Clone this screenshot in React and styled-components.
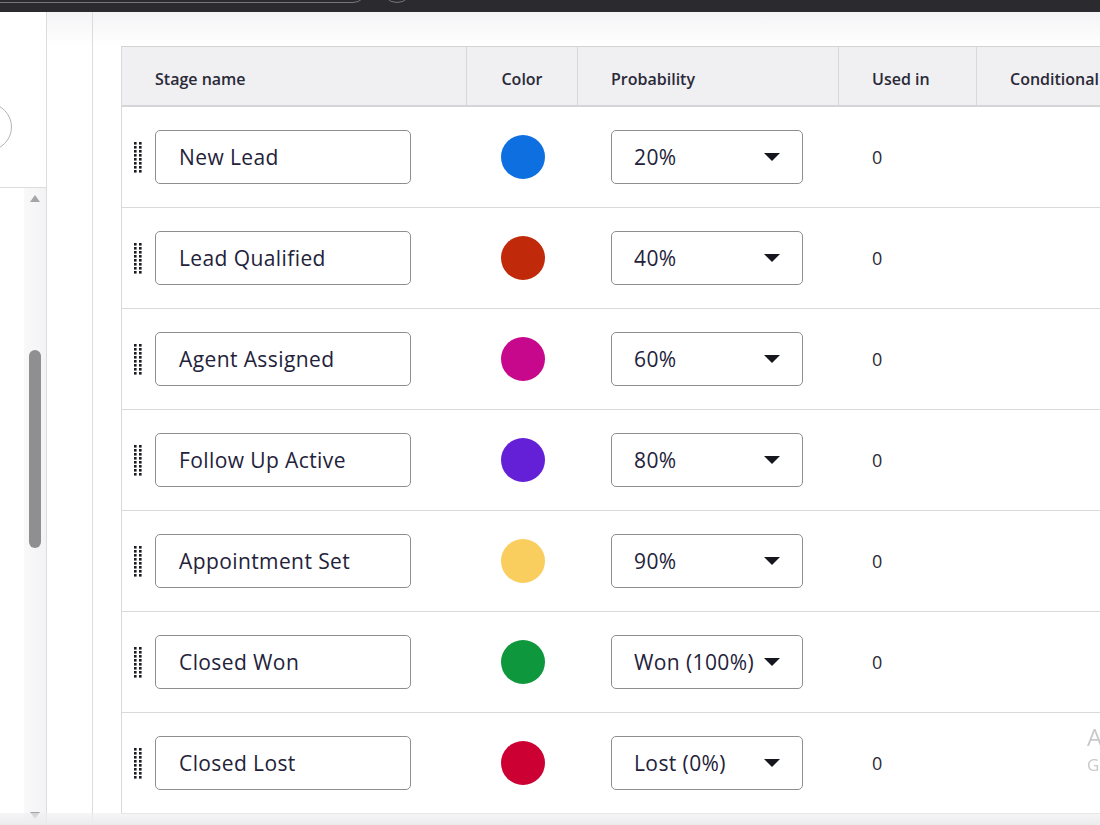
import React from 'react';
import styled, { createGlobalStyle } from 'styled-components';

const GlobalStyle = createGlobalStyle`
  html, body {
    margin: 0;
    padding: 0;
    background: #fff;
    overflow: hidden;
  }
  body {
    font-family: 'Open Sans', 'Liberation Sans', sans-serif;
    color: #23223a;
  }
`

const stages = [
  { name: 'New Lead', color: '#0d6fe0', prob: '20%' },
  { name: 'Lead Qualified', color: '#c0290a', prob: '40%' },
  { name: 'Agent Assigned', color: '#c7078c', prob: '60%' },
  { name: 'Follow Up Active', color: '#6320d6', prob: '80%' },
  { name: 'Appointment Set', color: '#f9cd5e', prob: '90%' },
  { name: 'Closed Won', color: '#0f973e', prob: 'Won (100%)' },
  { name: 'Closed Lost', color: '#cc0033', prob: 'Lost (0%)' },
]

const Page = styled.div`
  width: 1100px;
  height: 825px;
  display: flex;
  flex-direction: column;
  overflow: hidden;
`
const TopBar = styled.div`
  height: 12px;
  flex: none;
  background: #2b2a2e;
  display: flex;
  align-items: flex-end;
  overflow: hidden;
`
const UrlBar = styled.div`
  width: 380px;
  height: 30px;
  margin: 0 0 9px -15px;
  border: 1px solid #77767b;
  border-radius: 14px;
  flex: none;
`
const RoundBtn = styled.div`
  width: 30px;
  height: 30px;
  margin: 0 0 9px 14px;
  border: 1px solid #77767b;
  border-radius: 50%;
  flex: none;
`
const Body = styled.div`
  flex: 1;
  display: flex;
  min-height: 0;
`
const LeftPanel = styled.div`
  width: 46px;
  flex: none;
  border-right: 1px solid #dcdcdc;
  display: flex;
  flex-direction: column;
  overflow: hidden;
`
const PanelTop = styled.div`
  height: 176px;
  flex: none;
  border-bottom: 1px solid #dcdcdc;
  padding-top: 91px;
  box-sizing: border-box;
`
const PanelCircle = styled.div`
  width: 48px;
  height: 48px;
  margin-left: -36px;
  border: 1px solid #b4b4b8;
  border-radius: 50%;
  box-sizing: border-box;
`
const ScrollArea = styled.div`
  flex: 1;
  display: flex;
  justify-content: flex-end;
`
const Track = styled.div`
  width: 22px;
  background: linear-gradient(to right, #f9f9fa, #f3f3f5);
  display: flex;
  flex-direction: column;
  align-items: center;
  padding: 7px 0 6px;
  box-sizing: border-box;
`
const Arrow = styled.div`
  width: 0;
  height: 0;
  border-left: 5px solid transparent;
  border-right: 5px solid transparent;
  ${p => p.down
    ? 'border-top: 7px solid #a5a5a8; margin-top: auto;'
    : 'border-bottom: 7px solid #a5a5a8;'}
`
const Thumb = styled.div`
  width: 12px;
  height: 198px;
  margin-top: 148px;
  border-radius: 6px;
  background: #8f8f92;
`
const Gutter = styled.div`
  width: 45px;
  flex: none;
  border-right: 1px solid #dcdcdc;
  background: linear-gradient(to bottom, #f4f4f6 0px, #fff 34px);
`
const Main = styled.div`
  flex: 1;
  padding: 34px 0 0 28px;
  background: linear-gradient(to bottom, #f4f4f6 0px, #fff 34px);
  overflow: hidden;
`
const Table = styled.div`
  width: 1100px;
  border-left: 1px solid #d9d9d9;
  border-top: 1px solid #d3d3d6;
  background: #fff;
`
const cols = '345px 111px 261px 138px 1fr'
const HeadRow = styled.div`
  display: grid;
  grid-template-columns: ${cols};
  height: 58px;
  background: #f0eff2;
  border-bottom: 2px solid #d5d5d8;
`
const HeadCell = styled.div`
  display: flex;
  align-items: center;
  justify-content: ${p => (p.center ? 'center' : 'flex-start')};
  padding: 6px 0 0 ${p => (p.center ? 0 : 33)}px;
  border-right: ${p => (p.last ? 'none' : '1px solid #d8d8db')};
  font-size: 16px;
  font-weight: 600;
  color: #2a2a38;
  white-space: nowrap;
`
const Row = styled.div`
  display: grid;
  grid-template-columns: ${cols};
  height: 100px;
  border-bottom: 1px solid #d9d9dc;
`
const Cell = styled.div`
  display: flex;
  align-items: center;
  justify-content: ${p => (p.center ? 'center' : 'flex-start')};
  padding-left: ${p => (p.center ? 0 : p.pad ?? 33)}px;
`
const NameInput = styled.div`
  width: 256px;
  height: 54px;
  box-sizing: border-box;
  margin-left: 13px;
  border: 1px solid #8e8e92;
  border-radius: 5px;
  display: flex;
  align-items: center;
  padding-left: 23px;
  font-size: 21px;
  letter-spacing: 0.4px;
  color: #23223a;
  white-space: nowrap;
`
const Swatch = styled.div`
  width: 44px;
  height: 44px;
  border-radius: 50%;
  background: ${p => p.color};
`
const Select = styled.div`
  width: 192px;
  height: 54px;
  box-sizing: border-box;
  border: 1px solid #8e8e92;
  border-radius: 5px;
  display: flex;
  align-items: center;
  justify-content: space-between;
  padding: 0 22px 0 22px;
  font-size: 21px;
  letter-spacing: 0.4px;
  color: #23223a;
  white-space: nowrap;
`
const Caret = styled.span`
  width: 0;
  height: 0;
  flex: none;
  margin-left: 6px;
  border-left: 8px solid transparent;
  border-right: 8px solid transparent;
  border-top: 8px solid #16161e;
`
const Count = styled.span`
  font-size: 18px;
  color: #2a2a38;
`
const BottomFade = styled.div`
  position: fixed;
  left: 0;
  right: 0;
  bottom: 0;
  height: 12px;
  background: linear-gradient(to bottom, rgba(240,240,242,0.6), #ececee);
  pointer-events: none;
`
const Watermark = styled.div`
  position: fixed;
  left: 1087px;
  top: 722px;
  color: #c9c9cc;
  white-space: nowrap;
  line-height: 1.25;
  pointer-events: none;
`
const WmTitle = styled.div`
  font-size: 24px;
`
const WmSub = styled.div`
  font-size: 17px;
  margin-top: 2px;
`

const DragHandle = () => (
  <svg width="8" height="31" viewBox="0 0 8 31">
    {Array.from({ length: 8 }).map((_, i) => (
      <g key={i} fill="#1c1c22">
        <rect x="0" y={i * 4} width="2.6" height="2.6" />
        <rect x="5" y={i * 4} width="2.6" height="2.6" />
      </g>
    ))}
  </svg>
)

const App = () => (
  <Page>
    <GlobalStyle />
    <TopBar>
      <UrlBar />
      <RoundBtn />
    </TopBar>
    <Body>
      <LeftPanel>
        <PanelTop>
          <PanelCircle />
        </PanelTop>
        <ScrollArea>
          <Track>
            <Arrow />
            <Thumb />
            <Arrow down />
          </Track>
        </ScrollArea>
      </LeftPanel>
      <Gutter />
      <Main>
        <Table>
          <HeadRow>
            <HeadCell>Stage name</HeadCell>
            <HeadCell center>Color</HeadCell>
            <HeadCell>Probability</HeadCell>
            <HeadCell>Used in</HeadCell>
            <HeadCell last>Conditional</HeadCell>
          </HeadRow>
          {stages.map(s => (
            <Row key={s.name}>
              <Cell pad={12}>
                <DragHandle />
                <NameInput>{s.name}</NameInput>
              </Cell>
              <Cell center>
                <Swatch color={s.color} />
              </Cell>
              <Cell>
                <Select>
                  {s.prob}
                  <Caret />
                </Select>
              </Cell>
              <Cell>
                <Count>0</Count>
              </Cell>
              <Cell />
            </Row>
          ))}
        </Table>
      </Main>
    </Body>
    <Watermark>
      <WmTitle>Activate Windows</WmTitle>
      <WmSub>Go to Settings to activate Windows.</WmSub>
    </Watermark>
    <BottomFade />
  </Page>
)

export default App;
